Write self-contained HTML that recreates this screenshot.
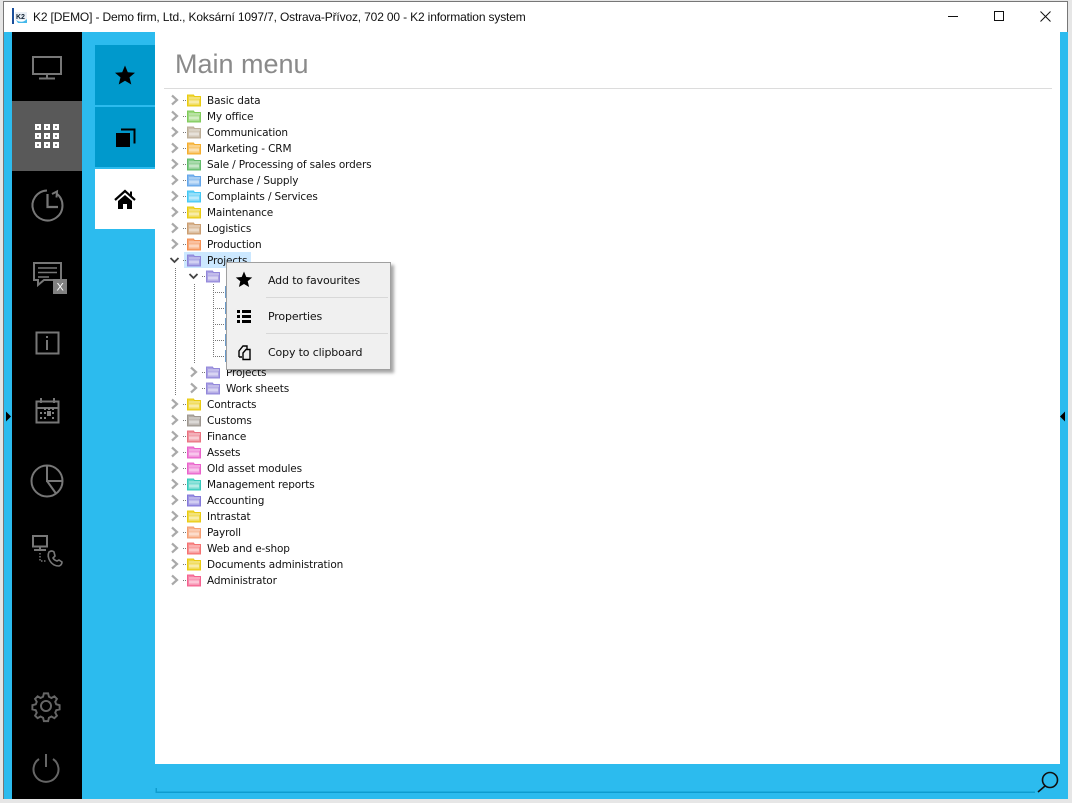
<!DOCTYPE html>
<html><head><meta charset="utf-8"><style>
html,body{margin:0;padding:0;width:1072px;height:803px;overflow:hidden;background:#fff;font-family:"Liberation Sans",sans-serif}
.a{position:absolute}
.t{position:absolute;margin-top:1px;font-family:"DejaVu Sans",sans-serif;font-size:10.5px;line-height:16px;color:#111;white-space:nowrap;letter-spacing:-.14px}
.m{position:absolute;left:268px;margin-top:1px;font-family:"DejaVu Sans",sans-serif;font-size:11px;line-height:16px;color:#111;white-space:nowrap;letter-spacing:-.15px}
</style></head><body>
<div class="a" style="left:0;top:0;width:1072px;height:803px;background:#e6e6e6"></div>
<div class="a" style="left:3px;top:1px;width:1065px;height:798px;background:#fff;border:1px solid #777;box-sizing:border-box"></div>
<div class="a" style="left:4px;top:32px;width:1064px;height:767px;background:#2cbbee"></div>
<div class="a" style="left:12px;top:32px;width:70px;height:767px;background:#000"></div>
<div class="a" style="left:12px;top:101px;width:70px;height:70px;background:#595959"></div>
<div class="a" style="left:95px;top:45px;width:60px;height:60px;background:#0099cc"></div>
<div class="a" style="left:95px;top:107px;width:60px;height:60px;background:#0099cc"></div>
<div class="a" style="left:95px;top:169px;width:60px;height:60px;background:#fff"></div>
<div class="a" style="left:155px;top:32px;width:905px;height:732px;background:#fff"></div>
<div class="a" style="left:33px;top:9px;font-family:'Liberation Sans',sans-serif;font-size:12px;line-height:16px;color:#111;white-space:nowrap;letter-spacing:-.155px">K2 [DEMO] - Demo firm, Ltd., Koksární 1097/7, Ostrava-Přívoz, 702 00 - K2 information system</div>
<div class="a" style="left:175px;top:48px;font-family:'Liberation Sans',sans-serif;font-size:27px;line-height:32px;color:#8a8a8a;white-space:nowrap">Main menu</div>
<div class="a" style="left:164px;top:88px;width:888px;height:1px;background:#dcdcdc"></div>
<div class="a" style="left:184px;top:252px;width:67px;height:16px;background:#cce8ff"></div>

<svg class="a" style="left:0;top:0" width="1072" height="803" viewBox="0 0 1072 803">
<defs>
<g id="f"><path d="M.5 1.500h6l1 1.500h6v9.500H.5z" fill="currentColor" fill-opacity=".75" stroke="currentColor" stroke-opacity=".9" stroke-width="1"/><path d="M2 6h10v5H2z" fill="#fff" fill-opacity=".35"/><path d="M2 4.500h11M2 8.500h10" stroke="#fff" stroke-opacity=".6"/></g>
<path id="c" d="M-3-4.500 2 0-3 4.500" fill="none" stroke="#a9a9a9" stroke-width="2.200"/>
</defs>
<!-- window controls -->
<path d="M948 16.500h10" stroke="#111"/>
<rect x="994.500" y="11.500" width="9" height="9" fill="none" stroke="#111"/>
<path d="M1040.500 11.500l10 10M1050.500 11.500l-10 10" stroke="#111"/>
<!-- app icon -->
<rect x="12" y="8" width="2" height="16" fill="#1a4f9c"/>
<rect x="15" y="12" width="12" height="8" fill="#e8eef5"/>
<path d="M16 20q6 4 11-1v4h-9z" fill="#45b8ea"/>
<text x="16" y="19" font-family="Liberation Sans" font-size="7" font-weight="bold" fill="#123">K2</text>
<!-- sidebar side arrows -->
<path d="M6 411.500l5 5-5 5z" fill="#000"/>
<path d="M1065 411.500l-5 5 5 5z" fill="#000"/>
<!-- sidebar icons -->
<g fill="none" stroke="#777" stroke-width="2">
<rect x="33" y="57" width="28" height="17"/><path d="M47 74v4M39 78.500h16"/>
<path d="M56.500 193.500A15 15 0 1 1 47 190.500"/>
<path d="M47.500 194v13H58" stroke-width="2.200"/>
<path d="M52 194l5-2.500-.5 6" stroke-width="2"/>
<path d="M34 263h27v17H44l-6 5v-5h-4z"/>
<path d="M38 268h19M38 272.500h19M38 277h11" stroke-width="1.500"/>
<rect x="36.500" y="332.500" width="22" height="21"/><path d="M47 340v10M47 336v2"/>
<rect x="36.500" y="401.500" width="22" height="21"/><path d="M36 408h23M41 398v5M54 398v5"/>
<circle cx="47" cy="481" r="15.500"/><path d="M47 465.500V481h15.500M47 481l9 12.500"/>
<rect x="33" y="536" width="14" height="10.500"/><path d="M40 546.500v3M34 550h12"/>
<path d="M40 553v8h6" stroke-dasharray="1.500 1.500" stroke-width="1.500"/>
<path d="M49 552q3-2 5 0l1 4-2 2q1 2 4 3l2-1 3 2q0 3-3 4-6 0-9-5t-1-9z" stroke-width="1.600"/>
<g transform="translate(46 706) scale(.84) translate(-46 -707)" stroke="#666" stroke-width="2.300"><path d="M43.500 692h5l1 4 3 1.500 3.500-2 3 3-2 3.500 1.200 3 4 1v5l-4 1-1.200 3 2 3.500-3 3-3.500-2-3 1.500-1 4h-5l-1-4-3-1.500-3.500 2-3-3 2-3.500-1.200-3-4-1v-5l4-1 1.200-3-2-3.500 3-3 3.500 2 3-1.500z"/>
<circle cx="46" cy="707" r="6"/></g>
<path d="M39 759a12.500 12.500 0 1 0 14 0M46 754v13" stroke="#666"/>
</g>
<g fill="#fff">
<path d="M35 124h6v6h-6zM44 124h6v6h-6zM53 124h6v6h-6zM35 133h6v6h-6zM44 133h6v6h-6zM53 133h6v6h-6zM35 142h6v6h-6zM44 142h6v6h-6zM53 142h6v6h-6z"/>
</g>
<path d="M37 126h2v2h-2zM46 126h2v2h-2zM55 126h2v2h-2zM37 135h2v2h-2zM46 135h2v2h-2zM55 135h2v2h-2zM37 144h2v2h-2zM46 144h2v2h-2zM55 144h2v2h-2z" fill="#888"/>
<rect x="53" y="279" width="14" height="15" fill="#808080"/>
<text x="56.500" y="290.500" font-family="Liberation Sans" font-size="11" fill="#fff">X</text>
<path d="M40 412h2v2h-2zM44 412h2v2h-2zM52 412h2v2h-2zM40 417h2v2h-2zM44 417h2v2h-2zM52 417h2v2h-2zM47 411h4v5h-4zM44 408h2v2h-2zM48 408h2v2h-2zM52 408h2v2h-2z" fill="#808080"/>
<!-- tabs icons -->
<path d="M125 65.500l2.800 6.800 7.200.5-5.500 4.600 1.800 7.100-6.300-3.800-6.300 3.800 1.800-7.100-5.500-4.600 7.200-.5z" fill="#000"/>
<path d="M116 133h14v14h-14z" fill="#000"/><path d="M121 129.500h13.500v14" fill="none" stroke="#000" stroke-width="2"/>
<path d="M115 200l10-9 10 9" fill="none" stroke="#000" stroke-width="2.200"/>
<path d="M118 201l7-6 7 6v8h-5v-5h-4v5h-5z" fill="#000"/>
<path d="M130 191.500h2v4.500h-2z" fill="#000"/>
<!-- search bar -->
<path d="M155.500 788v5H1035v-1.500H157V788z" fill="#0f9ccf"/>
<circle cx="1050" cy="780" r="7.500" fill="none" stroke="#111" stroke-width="1.600"/>
<path d="M1045 786l-7 6" stroke="#111" stroke-width="1.600"/>
<!-- tree lines -->
<g stroke="#777" stroke-dasharray="1 1" fill="none">
<path d="M175.500 268v128M194.500 284v80M213.500 284v72"/>
<path d="M213 292.500h12M213 308.500h12M213 324.500h12M213 340.500h12M213 356.500h12"/>
<path d="M183 100.500h4M183 116.500h4M183 132.500h4M183 148.500h4M183 164.500h4M183 180.500h4M183 196.500h4M183 212.500h4M183 228.500h4M183 244.500h4M183 260.500h4"/>
<path d="M202 276.500h4M202 372.500h4M202 388.500h4"/>
<path d="M183 404.500h4M183 420.500h4M183 436.500h4M183 452.500h4M183 468.500h4M183 484.500h4M183 500.500h4M183 516.500h4M183 532.500h4M183 548.500h4M183 564.500h4M183 580.500h4"/>
</g>
<g>
<use href="#c" x="175" y="100"/><use href="#c" x="175" y="116"/><use href="#c" x="175" y="132"/><use href="#c" x="175" y="148"/><use href="#c" x="175" y="164"/><use href="#c" x="175" y="180"/><use href="#c" x="175" y="196"/><use href="#c" x="175" y="212"/><use href="#c" x="175" y="228"/><use href="#c" x="175" y="244"/>
<use href="#c" x="194" y="372"/><use href="#c" x="194" y="388"/>
<use href="#c" x="175" y="404"/><use href="#c" x="175" y="420"/><use href="#c" x="175" y="436"/><use href="#c" x="175" y="452"/><use href="#c" x="175" y="468"/><use href="#c" x="175" y="484"/><use href="#c" x="175" y="500"/><use href="#c" x="175" y="516"/><use href="#c" x="175" y="532"/><use href="#c" x="175" y="548"/><use href="#c" x="175" y="564"/><use href="#c" x="175" y="580"/>
</g>
<path d="M170.500 258l4 4 4-4M189.500 274l4 4 4-4" fill="none" stroke="#444" stroke-width="1.800"/>
<g>
<use href="#f" x="187" y="93.500" color="#e8c800"/>
<use href="#f" x="187" y="109.500" color="#78c850"/>
<use href="#f" x="187" y="125.500" color="#b8a890"/>
<use href="#f" x="187" y="141.500" color="#f4a820"/>
<use href="#f" x="187" y="157.500" color="#58b860"/>
<use href="#f" x="187" y="173.500" color="#5aa0e8"/>
<use href="#f" x="187" y="189.500" color="#38c4f4"/>
<use href="#f" x="187" y="205.500" color="#e8c800"/>
<use href="#f" x="187" y="221.500" color="#c89868"/>
<use href="#f" x="187" y="237.500" color="#f48848"/>
<use href="#f" x="187" y="253.500" color="#8c80d8"/>
<use href="#f" x="206" y="269.500" color="#8c80d8"/>
<use href="#f" x="206" y="365.500" color="#8c80d8"/>
<use href="#f" x="206" y="381.500" color="#8c80d8"/>
<use href="#f" x="187" y="397.500" color="#e8c800"/>
<use href="#f" x="187" y="413.500" color="#989088"/>
<use href="#f" x="187" y="429.500" color="#e86878"/>
<use href="#f" x="187" y="445.500" color="#e858c8"/>
<use href="#f" x="187" y="461.500" color="#e858c8"/>
<use href="#f" x="187" y="477.500" color="#28c8b8"/>
<use href="#f" x="187" y="493.500" color="#7c70d8"/>
<use href="#f" x="187" y="509.500" color="#e8c800"/>
<use href="#f" x="187" y="525.500" color="#f49868"/>
<use href="#f" x="187" y="541.500" color="#f46868"/>
<use href="#f" x="187" y="557.500" color="#e8c800"/>
<use href="#f" x="187" y="573.500" color="#f45888"/>
</g>
<path d="M225 286h2v12h-2zM225 302h2v12h-2zM225 318h2v12h-2zM225 334h2v12h-2zM225 350h2v12h-2z" fill="#6a9ac8"/>
</svg>

<div class="t" style="left:207px;top:92px">Basic data</div>
<div class="t" style="left:207px;top:108px">My office</div>
<div class="t" style="left:207px;top:124px">Communication</div>
<div class="t" style="left:207px;top:140px">Marketing - CRM</div>
<div class="t" style="left:207px;top:156px">Sale / Processing of sales orders</div>
<div class="t" style="left:207px;top:172px">Purchase / Supply</div>
<div class="t" style="left:207px;top:188px">Complaints / Services</div>
<div class="t" style="left:207px;top:204px">Maintenance</div>
<div class="t" style="left:207px;top:220px">Logistics</div>
<div class="t" style="left:207px;top:236px">Production</div>
<div class="t" style="left:207px;top:252px">Projects</div>
<div class="t" style="left:226px;top:364px">Projects</div>
<div class="t" style="left:226px;top:380px">Work sheets</div>
<div class="t" style="left:207px;top:396px">Contracts</div>
<div class="t" style="left:207px;top:412px">Customs</div>
<div class="t" style="left:207px;top:428px">Finance</div>
<div class="t" style="left:207px;top:444px">Assets</div>
<div class="t" style="left:207px;top:460px">Old asset modules</div>
<div class="t" style="left:207px;top:476px">Management reports</div>
<div class="t" style="left:207px;top:492px">Accounting</div>
<div class="t" style="left:207px;top:508px">Intrastat</div>
<div class="t" style="left:207px;top:524px">Payroll</div>
<div class="t" style="left:207px;top:540px">Web and e-shop</div>
<div class="t" style="left:207px;top:556px">Documents administration</div>
<div class="t" style="left:207px;top:572px">Administrator</div>

<div class="a" style="left:226px;top:262px;width:165px;height:108px;background:#f0f0f0;border:1px solid #a0a0a0;box-sizing:border-box;box-shadow:3px 3px 3px rgba(0,0,0,.35)"></div>
<div class="a" style="left:266px;top:297px;width:122px;height:1px;background:#d8d8d8"></div>
<div class="a" style="left:266px;top:333px;width:122px;height:1px;background:#d8d8d8"></div>
<div class="m" style="top:272px">Add to favourites</div>
<div class="m" style="top:308px">Properties</div>
<div class="m" style="top:344px">Copy to clipboard</div>
<svg class="a" style="left:226px;top:262px" width="50" height="108" viewBox="226 262 50 108">
<path d="M244 271.500l2.300 5.500 5.900.5-4.500 3.800 1.400 5.700-5.100-3-5.100 3 1.400-5.700-4.500-3.800 5.900-.5z" fill="#000"/>
<path d="M237 310h3v3h-3zM242 310h9v3h-9zM237 315h3v3h-3zM242 315h9v3h-9zM237 320h3v3h-3zM242 320h9v3h-9z" fill="#000"/>
<path d="M239 357v-6l4-5h4v3" fill="none" stroke="#000" stroke-width="1.400"/>
<path d="M239 357h3M243 353l3-3.500h4v10h-7z" fill="#f0f0f0" stroke="#000" stroke-width="1.400"/>
</svg>
</body></html>
